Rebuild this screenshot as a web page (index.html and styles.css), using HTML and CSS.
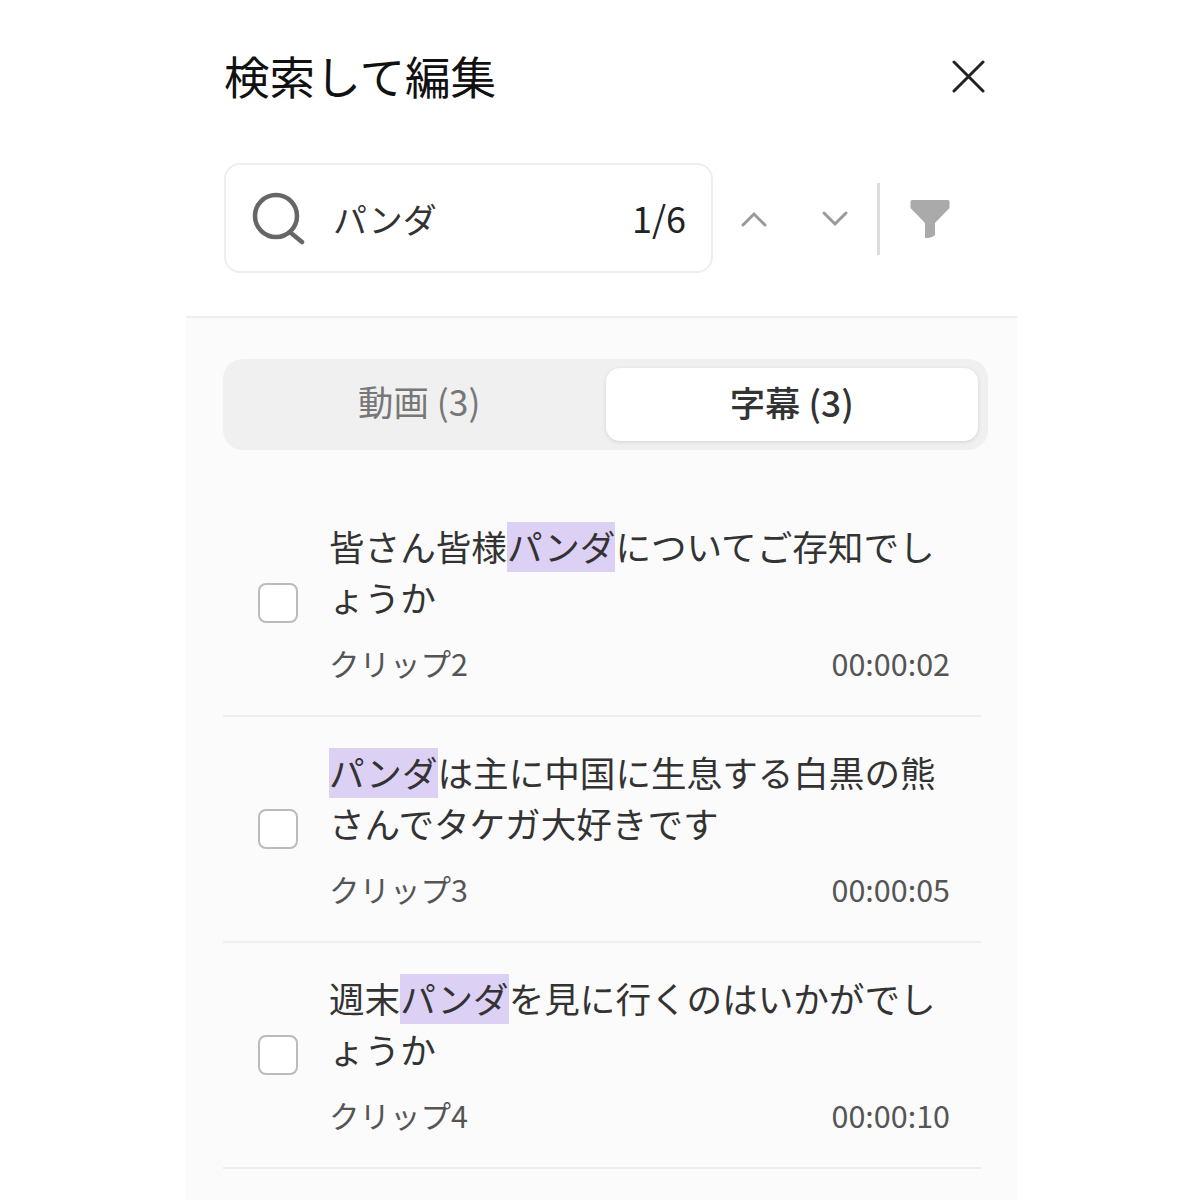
FILE: index.html
```html
<!DOCTYPE html>
<html lang="ja">

<head>
  <meta charset="UTF-8">
  <title>検索して編集</title>
  <link rel="stylesheet" href="styles.css">
</head>

<body>
  <div class="panel">
    <div class="panel-top">
      <div class="title-row">
        <h1 class="title">検索して編集</h1>
        <svg class="icon-close" width="33" height="33" viewBox="0 0 33 33">
          <path d="M2 2L31 31M31 2L2 31" />
        </svg>
      </div>

      <div class="search-row">
        <div class="search-box">
          <svg class="icon-search" width="54" height="54" viewBox="0 0 54 54">
            <circle cx="24" cy="25" r="21" />
            <path d="M39 42L50 51" />
          </svg>
          <span class="search-text">パンダ</span>
          <span class="search-count">1/6</span>
        </div>
        <svg class="icon-arrow arrow-up" width="28" height="17" viewBox="0 0 28 17">
          <path d="M3 14L14 3L25 14" />
        </svg>
        <svg class="icon-arrow arrow-down" width="28" height="17" viewBox="0 0 28 17">
          <path d="M3 3L14 14L25 3" />
        </svg>
        <div class="divider"></div>
        <svg class="icon-filter" width="40" height="38" viewBox="0 0 40 38">
          <path d="M2 0H38Q39.5 0 39.5 2V8L25 23V35Q22 38 18 38H15V23L0.5 8V2Q0.5 0 2 0Z" />
        </svg>
      </div>
    </div>

    <div class="panel-body">
      <div class="tabs">
        <div class="tab">動画 (3)</div>
        <div class="tab tab-active">字幕 (3)</div>
      </div>

      <div class="result">
        <div class="checkbox"></div>
        <div class="result-main">
          <div class="result-text">皆さん皆様<mark class="hit">パンダ</mark>についてご存知でしょうか</div>
          <div class="result-meta"><span>クリップ2</span><span>00:00:02</span></div>
        </div>
      </div>

      <div class="result">
        <div class="checkbox"></div>
        <div class="result-main">
          <div class="result-text"><mark class="hit">パンダ</mark>は主に中国に生息する白黒の熊さんでタケガ大好きです</div>
          <div class="result-meta"><span>クリップ3</span><span>00:00:05</span></div>
        </div>
      </div>

      <div class="result">
        <div class="checkbox"></div>
        <div class="result-main">
          <div class="result-text">週末<mark class="hit">パンダ</mark>を見に行くのはいかがでしょうか</div>
          <div class="result-meta"><span>クリップ4</span><span>00:00:10</span></div>
        </div>
      </div>
    </div>
  </div>
</body>

</html>
```

FILE: styles.css
```css
html, body {
  margin: 0;
  height: 1200px;
  overflow: hidden;
  background-color: #FFF;
}

body {
  font-family: "Noto Sans CJK JP", "Noto Sans", sans-serif;
  color: #333;
}

.panel {
  width: 831px;
  height: 1200px;
  margin-left: 186px;
  display: flex;
  flex-direction: column;
}

.panel-top {
  height: 316px;
  padding: 0 32px 0 38px;
  border-bottom: 2px solid #eee;
}

.title-row {
  height: 163px;
  display: flex;
  align-items: flex-start;
  justify-content: space-between;
}

.title {
  margin: 42px 0 0;
  font-size: 45.6px;
  line-height: 66px;
  font-weight: 400;
  color: #111;
}

.icon-close {
  margin: 60px 0 0;
}

.icon-close path {
  fill: none;
  stroke: #222;
  stroke-width: 3;
  stroke-linecap: round;
}

.search-row {
  display: flex;
  align-items: center;
}

.search-box {
  width: 489px;
  height: 110px;
  box-sizing: border-box;
  border: 2px solid #eee;
  border-radius: 16px;
  padding: 0 25px 0 26px;
  display: flex;
  align-items: center;
}

.icon-search circle,
.icon-search path {
  fill: none;
  stroke: #666;
  stroke-width: 4.5;
  stroke-linecap: round;
}

.search-text {
  flex: 1;
  margin-left: 27px;
  font-size: 34px;
}

.search-count {
  font-size: 36px;
  color: #222;
  padding-bottom: 2px;
}

.icon-arrow path {
  fill: none;
  stroke: #999;
  stroke-width: 3;
  stroke-linecap: round;
}

.arrow-up {
  margin-left: 27px;
  margin-top: 3px;
}

.arrow-down {
  margin-left: 53px;
}

.divider {
  width: 3px;
  height: 72px;
  margin-left: 28px;
  margin-top: 2px;
  background-color: #ddd;
}

.icon-filter {
  margin-left: 30px;
  margin-top: 2px;
}

.icon-filter path {
  fill: #aaa;
}

.panel-body {
  flex: 1;
  padding: 41px 29px 0 37px;
  background-color: #FBFBFB;
}

.tabs {
  height: 91px;
  box-sizing: border-box;
  padding: 9px 10px;
  display: flex;
  background-color: #F0F0F0;
  border-radius: 20px;
}

.tab {
  flex: 1;
  display: flex;
  align-items: center;
  justify-content: center;
  padding-bottom: 9px;
  font-size: 35.4px;
  color: #777;
}

.tab-active {
  padding-bottom: 7px;
  background-color: #FFF;
  border-radius: 14px;
  box-shadow: 0 1px 4px rgba(0, 0, 0, 0.12);
  color: #333;
  font-weight: 500;
}

.result {
  width: 758px;
  height: 224px;
  display: flex;
  align-items: center;
  border-bottom: 2px solid #eee;
}

.tabs + .result {
  margin-top: 41px;
}

.checkbox {
  width: 36px;
  height: 36px;
  margin-left: 35px;
  border: 2px solid #bbb;
  border-radius: 8px;
  background-color: #FFF;
  flex-shrink: 0;
}

.result-main {
  width: 621px;
  margin-left: 31px;
  padding-bottom: 2px;
}

.result-text {
  font-size: 35.6px;
  line-height: 51px;
}

.hit {
  background: linear-gradient(#DDD0F5, #DDD0F5) 0 100% / 100% 50px no-repeat;
  padding-bottom: 1px;
  color: inherit;
}

.result-meta {
  margin-top: 19px;
  display: flex;
  justify-content: space-between;
  font-size: 30.5px;
  line-height: 44px;
  color: #555;
}
```
